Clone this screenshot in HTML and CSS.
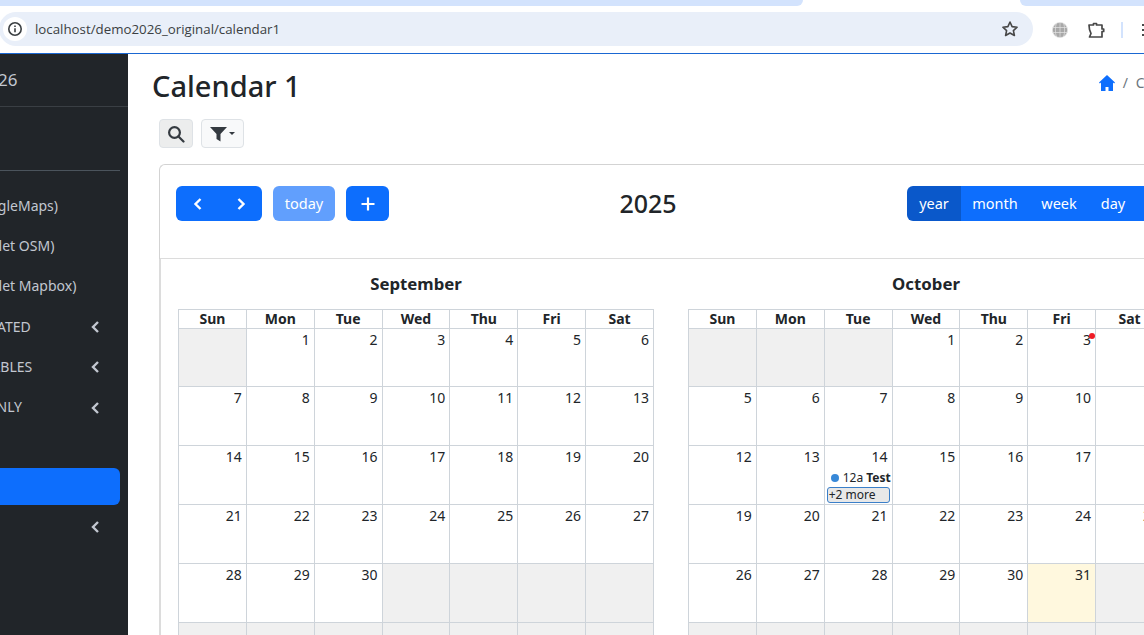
FILE: index.html
```html
<!DOCTYPE html>
<html lang="en">
<head>
    <meta charset="UTF-8">
    <meta name="viewport" content="width=device-width, initial-scale=1.0">
    <title>Calendar 1</title>
    <link rel="stylesheet" href="styles.css">
</head>
<body>
    <div class="tabstrip">
        <div class="tab-left"></div>
        <div class="tab-active"></div>
        <div class="tab-right"></div>
    </div>
    <div class="toolbar">
        <div class="address">
            <span class="site-info">
                <svg width="16" height="16" viewBox="0 0 16 16" fill="none" stroke="#3c4043" stroke-width="1.6"><circle cx="8" cy="8" r="6.2"/><path d="M8 7.2v4M8 4.4v1.6"/></svg>
            </span>
            <span class="url">localhost/demo2026_original/calendar1</span>
            <svg class="star" width="18" height="18" viewBox="0 0 18 18" fill="none" stroke="#474747" stroke-width="1.6" stroke-linejoin="round"><path d="M9 2l2.1 4.6 5 .6-3.7 3.4 1 4.9L9 13l-4.4 2.5 1-4.9L1.9 7.2l5-.6z"/></svg>
        </div>
        <svg class="globe" width="16" height="16" viewBox="0 0 16 16" fill="#a8a8a8" stroke="#e4e4e4" stroke-width=".7"><circle cx="8" cy="8" r="7.6"/><path d="M.5 5.5h15M.5 10.5h15M8 .5v15M4.5 1c-1.500 4-1.500 10 0 14M11.500 1c1.500 4 1.500 10 0 14" fill="none"/></svg>
        <svg class="puzzle" width="18" height="18" viewBox="0 0 18 18" fill="none" stroke="#474747" stroke-width="1.7" stroke-linejoin="round"><path d="M2 4h4.500V2.500h3V4H15v4h1.700v2.500H15V16H2.500L4 12.500 2.500 8.500z"/></svg>
        <span class="toolbar-sep"></span>
        <span class="menu-dots"></span>
    </div>

    <div class="page">
        <aside class="sidebar">
            <div class="sidebar-inner">
                <div class="brand">Demo 2026</div>
                <div class="user-panel"></div>
                <nav class="nav">
                    <a class="nav-link">Maps (GoogleMaps)</a>
                    <a class="nav-link">Maps (Leaflet OSM)</a>
                    <a class="nav-link">Maps (Leaflet Mapbox)</a>
                    <a class="nav-link nudge">DB GENERATED <svg class="chev" width="9" height="14" viewBox="0 0 9 14"><path d="M7 2L2 7l5 5"/></svg></a>
                    <a class="nav-link nudge">NESTED TABLES <svg class="chev" width="9" height="14" viewBox="0 0 9 14"><path d="M7 2L2 7l5 5"/></svg></a>
                    <a class="nav-link">ADMINS ONLY <svg class="chev" width="9" height="14" viewBox="0 0 9 14"><path d="M7 2L2 7l5 5"/></svg></a>
                    <a class="nav-link"></a>
                    <a class="nav-link active"></a>
                    <a class="nav-link"><svg class="chev" width="9" height="14" viewBox="0 0 9 14"><path d="M7 2L2 7l5 5"/></svg></a>
                </nav>
            </div>
        </aside>

        <main class="content">
            <div class="content-head">
                <h1 class="page-title">Calendar 1</h1>
                <div class="breadcrumb">
                    <svg width="16" height="16" viewBox="0 0 16 16" fill="#0d6efd"><path d="M8 0L0 7.500l.9 1L2 7.500V16h4.500v-4h3v4H14V7.500l1.100 1 .9-1z"/></svg>
                    <span class="crumb-sep">/</span>
                    <span class="crumb">Calendar 1</span>
                </div>
            </div>

            <div class="tools">
                <button class="tool-btn search-btn">
                    <svg width="18" height="18" viewBox="0 0 18 18" fill="none" stroke="#343a40" stroke-width="2.2"><circle cx="7.5" cy="7.5" r="5.4"/><path d="M11.500 11.500l5 5" stroke-linecap="round"/></svg>
                </button>
                <button class="tool-btn filter-btn">
                    <svg width="17" height="16" viewBox="0 0 17 16" fill="#343a40"><path d="M0 1h17l-6.500 7v7.500l-4-2.500V8z"/></svg>
                    <span class="caret"></span>
                </button>
            </div>

            <section class="card">
                <header class="cal-toolbar">
                    <div class="cal-left">
                        <div class="btn-pair">
                            <button class="btn icon-btn"><svg width="10" height="14" viewBox="0 0 10 14" fill="none" stroke="#fff" stroke-width="2.4"><path d="M7.500 2L2.500 7l5 5"/></svg></button>
                            <button class="btn icon-btn"><svg width="10" height="14" viewBox="0 0 10 14" fill="none" stroke="#fff" stroke-width="2.4"><path d="M2.500 2l5 5-5 5"/></svg></button>
                        </div>
                        <button class="btn today-btn">today</button>
                        <button class="btn plus-btn"><svg width="14" height="14" viewBox="0 0 14 14" stroke="#fff" stroke-width="2.2"><path d="M7 .5v13M.5 7h13"/></svg></button>
                    </div>
                    <h2 class="cal-title">2025</h2>
                    <div class="view-group">
                        <button class="btn view-btn active">year</button>
                        <button class="btn view-btn">month</button>
                        <button class="btn view-btn">week</button>
                        <button class="btn view-btn">day</button>
                        <button class="btn view-btn"></button>
                    </div>
                </header>

                <div class="cal-body">
                    <div class="month">
                        <div class="month-name">September</div>
                        <table class="grid">
                            <thead><tr><th>Sun</th><th>Mon</th><th>Tue</th><th>Wed</th><th>Thu</th><th>Fri</th><th>Sat</th></tr></thead>
                            <tbody>
                                <tr><td class="off"></td><td>1</td><td>2</td><td>3</td><td>4</td><td>5</td><td>6</td></tr>
                                <tr><td>7</td><td>8</td><td>9</td><td>10</td><td>11</td><td>12</td><td>13</td></tr>
                                <tr><td>14</td><td>15</td><td>16</td><td>17</td><td>18</td><td>19</td><td>20</td></tr>
                                <tr><td>21</td><td>22</td><td>23</td><td>24</td><td>25</td><td>26</td><td>27</td></tr>
                                <tr><td>28</td><td>29</td><td>30</td><td class="off"></td><td class="off"></td><td class="off"></td><td class="off"></td></tr>
                                <tr><td class="off"></td><td class="off"></td><td class="off"></td><td class="off"></td><td class="off"></td><td class="off"></td><td class="off"></td></tr>
                            </tbody>
                        </table>
                    </div>
                    <div class="month">
                        <div class="month-name">October</div>
                        <table class="grid">
                            <thead><tr><th>Sun</th><th>Mon</th><th>Tue</th><th>Wed</th><th>Thu</th><th>Fri</th><th>Sat</th></tr></thead>
                            <tbody>
                                <tr><td class="off"></td><td class="off"></td><td class="off"></td><td>1</td><td>2</td><td class="has-dot">3<span class="red-dot"></span></td><td>4</td></tr>
                                <tr><td>5</td><td>6</td><td>7</td><td>8</td><td>9</td><td>10</td><td>11</td></tr>
                                <tr>
                                    <td>12</td><td>13</td>
                                    <td class="has-events">14
                                        <div class="event"><span class="event-dot"></span>12a <b>Test</b></div>
                                        <div class="more">+2 more</div>
                                    </td>
                                    <td>15</td><td>16</td><td>17</td><td>18</td>
                                </tr>
                                <tr><td>19</td><td>20</td><td>21</td><td>22</td><td>23</td><td>24</td><td>25</td></tr>
                                <tr><td>26</td><td>27</td><td>28</td><td>29</td><td>30</td><td class="today">31</td><td class="off"></td></tr>
                                <tr><td class="off"></td><td class="off"></td><td class="off"></td><td class="off"></td><td class="off"></td><td class="off"></td><td class="off"></td></tr>
                            </tbody>
                        </table>
                    </div>
                </div>
            </section>
        </main>
    </div>
</body>
</html>
```

FILE: styles.css
```css
html, body {
    height: 100%;
}
body {
    margin: 0;
    overflow: hidden;
    background: #fff;
    color: #212529;
    font-family: "Noto Sans", "Open Sans", sans-serif;
    font-size: 14px;
}

/* browser chrome */
.tabstrip {
    display: flex;
    height: 6px;
    background: #fff;
}
.tab-left {
    width: 803px;
    background: #d3e3fd;
    border-bottom-right-radius: 8px;
}
.tab-active {
    width: 217px;
}
.tab-right {
    flex: 1;
    background: #d3e3fd;
    border-bottom-left-radius: 8px;
}
.toolbar {
    display: flex;
    align-items: center;
    height: 47px;
    border-bottom: 1px solid #1a67d2;
    background: #fff;
}
.address {
    display: flex;
    align-items: center;
    flex: none;
    width: 1034px;
    height: 34px;
    margin-left: -1px;
    margin-top: -1px;
    border-radius: 17px;
    background: #e9eff9;
    box-sizing: border-box;
    padding-left: 4px;
    padding-right: 14px;
}
.site-info {
    display: flex;
    align-items: center;
    justify-content: center;
    width: 24px;
    height: 24px;
    border-radius: 50%;
    background: #fff;
}
.url {
    flex: 1;
    margin-left: 8px;
    font-family: "Open Sans", sans-serif;
    font-size: 13.3px;
    color: #3b3f43;
}
.globe {
    margin-left: 19px;
}
.puzzle {
    margin-left: 19px;
}
.toolbar-sep {
    width: 2px;
    height: 16px;
    margin-left: 16px;
    background: #d3e3fd;
}
.menu-dots {
    width: 2px;
    height: 2px;
    margin-left: 19px;
    background: #474747;
    box-shadow: 0 -5px #474747, 0 5px #474747;
}

/* page */
.page {
    display: flex;
    height: calc(100% - 54px);
}
.sidebar {
    flex: none;
    width: 128px;
    overflow: hidden;
    background: #212529;
}
.sidebar-inner {
    width: 250px;
    margin-left: -122px;
    color: #c2c7d0;
}
.brand {
    height: 53px;
    box-sizing: border-box;
    padding-left: 48px;
    line-height: 52px;
    font-size: 17px;
    border-bottom: 1px solid #3a3f44;
}
.user-panel {
    height: 63px;
    margin: 0 8px;
    border-bottom: 1px solid #4b545c;
}
.nav {
    display: flex;
    flex-direction: column;
    padding: 14px 8px 0;
}
.nav-link {
    display: flex;
    align-items: center;
    position: relative;
    height: 40.33px;
    flex: none;
    padding-left: 41px;
    white-space: nowrap;
    color: #c2c7d0;
    font-size: 14px;
}
.nav-link.nudge {
    padding-left: 43px;
}
.nav-link .chev {
    position: absolute;
    right: 20px;
    top: 14px;
    fill: none;
    stroke: #c2c7d0;
    stroke-width: 2.4;
}
.nav-link.active {
    height: 37px;
    margin-top: 1px;
    margin-bottom: 1px;
    border-radius: 6px;
    background: #0d6efd;
}

.content {
    flex: none;
    width: 1100px;
    padding: 0 0 0 24px;
    box-sizing: border-box;
}
.content-head {
    display: flex;
    align-items: center;
    height: 65px;
}
.page-title {
    margin: 0;
    font-size: 29px;
    font-weight: 500;
    line-height: 1.2;
}
.breadcrumb {
    display: flex;
    align-items: center;
    gap: 8px;
    margin-top: -8px;
    margin-left: 798px;
    white-space: nowrap;
    flex: none;
    color: #6c757d;
}
.tools {
    display: flex;
    gap: 8px;
    margin-left: 7px;
}
.tool-btn {
    display: flex;
    align-items: center;
    justify-content: center;
    height: 29px;
    padding: 0;
    border: 1px solid #dee2e6;
    border-radius: 4px;
    background: #f8f9fa;
}
.search-btn {
    width: 34px;
    background: #eceded;
}
.filter-btn {
    width: 43px;
}
.caret {
    width: 0;
    height: 0;
    margin-left: 2px;
    margin-bottom: 1px;
    border-top: 3px solid #343a40;
    border-left: 3px solid transparent;
    border-right: 3px solid transparent;
}

.card {
    width: 1040px;
    margin: 16px 0 0 7px;
    border: 1px solid #d3d3d3;
    border-right: 0;
    border-radius: 6px 0 0 0;
}
.cal-toolbar {
    display: flex;
    align-items: flex-start;
    height: 94px;
    padding: 21px 0 0 16px;
    box-sizing: border-box;
    border-bottom: 1px solid #dcdcdc;
}
.cal-left {
    display: flex;
    flex: none;
    gap: 11px;
    width: 412px;
}
.btn {
    height: 35px;
    padding: 0 0 1px;
    border: 0;
    border-radius: 6px;
    background: #0d6efd;
    color: #fff;
    font-family: inherit;
    font-size: 14.5px;
    display: flex;
    align-items: center;
    justify-content: center;
}
.btn-pair {
    display: flex;
    width: 86px;
    border-radius: 6px;
    overflow: hidden;
}
.icon-btn {
    flex: 1;
    padding: 0;
    border-radius: 0;
}
.today-btn {
    width: 62px;
    background: #619ffd;
}
.plus-btn {
    width: 43px;
    padding: 0;
}
.cal-title {
    margin: 0;
    flex: none;
    width: 120px;
    text-align: center;
    line-height: 35px;
    font-size: 25px;
    font-weight: 500;
}
.view-group {
    display: flex;
    width: 293px;
    margin-left: auto;
    flex: none;
    border-radius: 6px;
    overflow: hidden;
}
.view-btn {
    border-radius: 0;
    width: 60px;
}
.view-btn.active {
    width: 54px;
    background: #0a58ca;
}
.view-btn:nth-child(2) {
    width: 68px;
}
.view-btn:nth-child(4) {
    width: 48px;
}

.cal-body {
    display: flex;
    gap: 34px;
    padding: 0 0 0 17px;
    border-left: 2px solid #dcdcdc;
    margin-left: -1px;
}
.month {
    flex: none;
    width: 476px;
}
.month-name {
    height: 50px;
    padding-top: 13px;
    box-sizing: border-box;
    text-align: center;
    font-size: 16.8px;
    font-weight: 700;
    line-height: 24px;
}
.grid {
    width: 476px;
    table-layout: fixed;
    border-collapse: collapse;
}
.grid th {
    height: 18px;
    padding: 0;
    border: 1px solid #ced4da;
    font-size: 14px;
    font-weight: 700;
    line-height: 18px;
}
.grid td {
    height: 59px;
    padding: 0 4px 0 0;
    box-sizing: border-box;
    border: 1px solid #ced4da;
    vertical-align: top;
    text-align: right;
    font-size: 14px;
    line-height: 21px;
}
.grid tbody tr:first-child td {
    height: 58px;
}
.grid td.off {
    background: #f0f0f0;
}
.grid td.today {
    background: #fff8de;
}
.has-dot {
    position: relative;
}
.red-dot {
    position: absolute;
    top: 4px;
    right: 0;
    width: 6px;
    height: 6px;
    border-radius: 50%;
    background: #ee1c25;
}
.event {
    display: flex;
    align-items: center;
    height: 16px;
    padding-left: 6px;
    margin-top: 3px;
    margin-right: -3px;
    font-size: 12px;
    white-space: pre;
    line-height: 16px;
    overflow: hidden;
}
.event b {
    font-weight: 700;
}
.event-dot {
    flex: none;
    width: 8px;
    height: 8px;
    margin-right: 4px;
    border-radius: 50%;
    background: #3788d8;
}
.more {
    height: 14px;
    margin: 1px -2px 0 2px;
    padding-left: 1px;
    border: 1px solid #3a7fc9;
    border-radius: 3px;
    background: #e8e8e8;
    text-align: left;
    font-size: 12px;
    line-height: 14px;
}
```
